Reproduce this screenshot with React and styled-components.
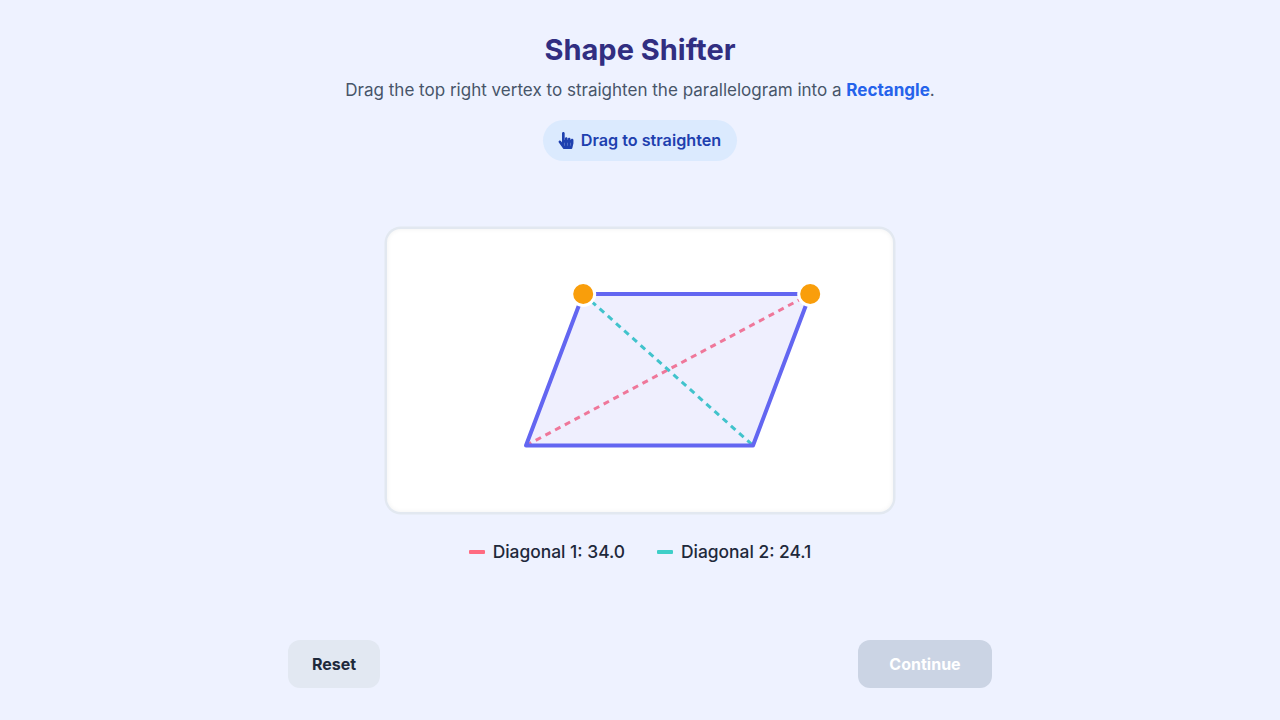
import React from 'react';
import styled, { createGlobalStyle } from 'styled-components';
import { FaHandPointer } from 'react-icons/fa';

const GlobalStyle = createGlobalStyle`
  body {
    margin: 0;
    background: #eef2ff;
    font-family: 'Inter', 'Liberation Sans', sans-serif;
  }
`;

const Page = styled.div`
  height: 720px;
  box-sizing: border-box;
  display: flex;
  flex-direction: column;
  align-items: center;
  padding-top: 32px;
  overflow: hidden;
`;

const Title = styled.h1`
  margin: 0;
  font-size: 29px;
  line-height: 36px;
  font-weight: 700;
  color: #312e81;
`;

const Subtitle = styled.p`
  margin: 8px 0 0;
  font-size: 17.05px;
  line-height: 28px;
  color: #475569;
`;

const Highlight = styled.strong`
  font-weight: 700;
  color: #2563eb;
`;

const Chip = styled.div`
  margin-top: 16px;
  height: 41px;
  box-sizing: border-box;
  padding: 0 16px 1px 15px;
  display: flex;
  align-items: center;
  gap: 7px;
  border-radius: 21px;
  background: #dbeafe;
  color: #1e40af;
  font-size: 16.2px;
  font-weight: 600;

  svg {
    width: 16px;
    height: 17px;
  }
`;

const Card = styled.div`
  margin-top: 66px;
  width: 510px;
  height: 287px;
  box-sizing: border-box;
  border: 2px solid #e2e8f0;
  border-radius: 16px;
  background: #fff;
  box-shadow: 0 0 0 0.5px #e2e8f0, inset 0 0 5px rgba(0, 0, 0, 0.06);
  display: flex;
`;

const Legend = styled.div`
  margin-top: 26px;
  display: flex;
  gap: 32px;
`;

const LegendItem = styled.div`
  display: flex;
  align-items: center;
  gap: 8px;
  font-size: 17.4px;
  line-height: 24px;
  font-weight: 500;
  color: #1e293b;
`;

const Swatch = styled.span`
  width: 16px;
  height: 4px;
  border-radius: 1px;
  background: ${(p) => p.color};
`;

const Footer = styled.div`
  margin-top: 76px;
  width: 704px;
  display: flex;
  justify-content: space-between;
`;

const Button = styled.button`
  height: 48px;
  width: ${(p) => (p.$primary ? 134 : 92)}px;
  padding: 0;
  border: none;
  border-radius: 12px;
  font-family: inherit;
  font-size: 16px;
  font-weight: 700;
  background: ${(p) => (p.$primary ? '#cbd4e4' : '#e2e8f2')};
  color: ${(p) => (p.$primary ? '#fff' : '#1e293b')};
`;

const Shape = () => (
  <svg width="506" height="283" viewBox="0 0 506 283">
    <line x1="139" y1="216.5" x2="423.2" y2="65" stroke="#ff7a90" strokeWidth="3" strokeDasharray="6 5" />
    <line x1="196.2" y1="65" x2="366" y2="216.5" stroke="#3ecfc8" strokeWidth="3" strokeDasharray="6 5" />
    <polygon
      points="139,216.5 196.2,65 423.2,65 366,216.5"
      fill="rgba(99,102,241,0.1)"
      stroke="#6366f1"
      strokeWidth="4"
      strokeLinejoin="round"
    />
    <circle cx="196.2" cy="65" r="11.5" fill="#f99e0b" stroke="#fff" strokeWidth="3" />
    <circle cx="423.2" cy="65" r="11.5" fill="#f99e0b" stroke="#fff" strokeWidth="3" />
  </svg>
);

export default function App() {
  return (
    <Page>
      <GlobalStyle />
      <Title>Shape Shifter</Title>
      <Subtitle>
        Drag the top right vertex to straighten the parallelogram into a <Highlight>Rectangle</Highlight>.
      </Subtitle>
      <Chip>
        <FaHandPointer />
        Drag to straighten
      </Chip>
      <Card>
        <Shape />
      </Card>
      <Legend>
        <LegendItem>
          <Swatch color="#ff6b81" />
          Diagonal 1: 34.0
        </LegendItem>
        <LegendItem>
          <Swatch color="#3ecfc8" />
          Diagonal 2: 24.1
        </LegendItem>
      </Legend>
      <Footer>
        <Button>Reset</Button>
        <Button $primary>Continue</Button>
      </Footer>
    </Page>
  );
}
